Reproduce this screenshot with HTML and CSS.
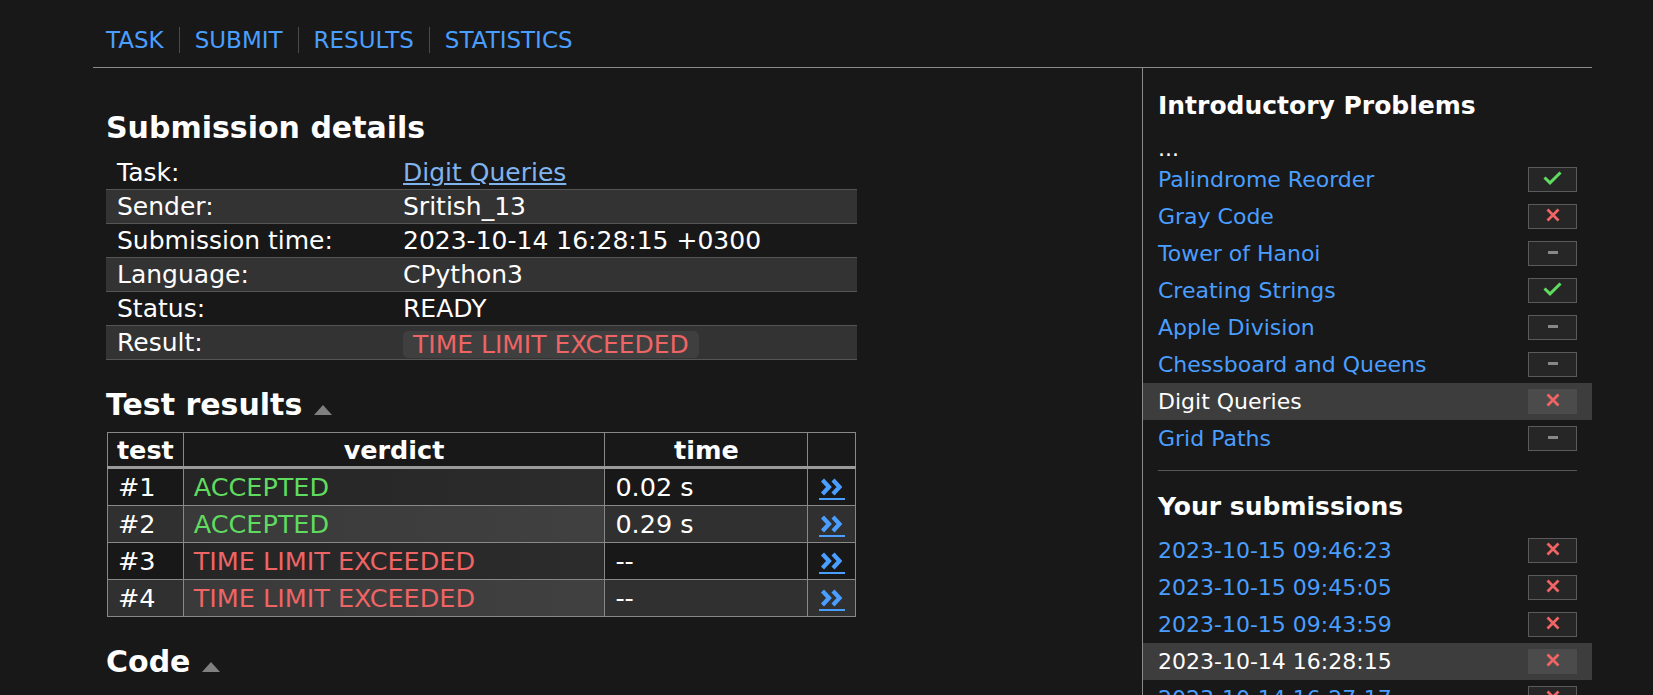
FILE: index.html
```html
<!DOCTYPE html>
<html>
<head>
<meta charset="utf-8">
<title>CSES - Submission</title>
<link rel="stylesheet" href="styles.css">
</head>
<body>
<div class="page">
  <nav class="nav">
    <a href="#">TASK</a>
    <a href="#">SUBMIT</a>
    <a href="#">RESULTS</a>
    <a href="#">STATISTICS</a>
  </nav>
  <div class="content">
    <main class="main">
      <h2 class="h-first">Submission details</h2>
      <table class="details">
        <tr><td class="lbl">Task:</td><td><a class="task-link" href="#">Digit Queries</a></td></tr>
        <tr><td class="lbl">Sender:</td><td>Sritish_13</td></tr>
        <tr><td class="lbl">Submission time:</td><td>2023-10-14 16:28:15 +0300</td></tr>
        <tr><td class="lbl">Language:</td><td>CPython3</td></tr>
        <tr><td class="lbl">Status:</td><td>READY</td></tr>
        <tr><td class="lbl">Result:</td><td><span class="badge red">TIME LIMIT EXCEEDED</span></td></tr>
      </table>

      <h2 class="h-next">Test results <span class="tri"></span></h2>
      <table class="tests">
        <tr><th class="c-test">test</th><th class="c-verdict">verdict</th><th class="c-time">time</th><th class="c-link"></th></tr>
        <tr><td>#1</td><td class="v green">ACCEPTED</td><td>0.02 s</td><td class="lnk"><a href="#"><svg width="24" height="18" viewBox="0 0 24 18"><path d="M2.5 2 L9 9 L2.5 16 M13 2 L19.5 9 L13 16" fill="none" stroke="#4a9eff" stroke-width="4.2"/></svg></a></td></tr>
        <tr><td>#2</td><td class="v green">ACCEPTED</td><td>0.29 s</td><td class="lnk"><a href="#"><svg width="24" height="18" viewBox="0 0 24 18"><path d="M2.5 2 L9 9 L2.5 16 M13 2 L19.5 9 L13 16" fill="none" stroke="#4a9eff" stroke-width="4.2"/></svg></a></td></tr>
        <tr><td>#3</td><td class="v red">TIME LIMIT EXCEEDED</td><td>--</td><td class="lnk"><a href="#"><svg width="24" height="18" viewBox="0 0 24 18"><path d="M2.5 2 L9 9 L2.5 16 M13 2 L19.5 9 L13 16" fill="none" stroke="#4a9eff" stroke-width="4.2"/></svg></a></td></tr>
        <tr><td>#4</td><td class="v red">TIME LIMIT EXCEEDED</td><td>--</td><td class="lnk"><a href="#"><svg width="24" height="18" viewBox="0 0 24 18"><path d="M2.5 2 L9 9 L2.5 16 M13 2 L19.5 9 L13 16" fill="none" stroke="#4a9eff" stroke-width="4.2"/></svg></a></td></tr>
      </table>

      <h2 class="h-code">Code <span class="tri"></span></h2>
    </main>

    <aside class="side">
      <h3 class="s-head">Introductory Problems</h3>
      <div class="dots">...</div>
      <ul class="list">
        <li class="row"><a href="#">Palindrome Reorder</a><span class="box"><svg width="19" height="14" viewBox="0 0 19 14"><path d="M1.5 6.5 L7 11.8 L17.5 1.5" fill="none" stroke="#5fdc5f" stroke-width="3"/></svg></span></li>
        <li class="row"><a href="#">Gray Code</a><span class="box"><svg width="14" height="14" viewBox="0 0 14 14"><path d="M1.5 1.5 L12.5 12.5 M12.5 1.5 L1.5 12.5" fill="none" stroke="#ef6464" stroke-width="2.8"/></svg></span></li>
        <li class="row"><a href="#">Tower of Hanoi</a><span class="box"><span class="dash"></span></span></li>
        <li class="row"><a href="#">Creating Strings</a><span class="box"><svg width="19" height="14" viewBox="0 0 19 14"><path d="M1.5 6.5 L7 11.8 L17.5 1.5" fill="none" stroke="#5fdc5f" stroke-width="3"/></svg></span></li>
        <li class="row"><a href="#">Apple Division</a><span class="box"><span class="dash"></span></span></li>
        <li class="row"><a href="#">Chessboard and Queens</a><span class="box"><span class="dash"></span></span></li>
        <li class="row current"><a href="#">Digit Queries</a><span class="box"><svg width="14" height="14" viewBox="0 0 14 14"><path d="M1.5 1.5 L12.5 12.5 M12.5 1.5 L1.5 12.5" fill="none" stroke="#ef6464" stroke-width="2.8"/></svg></span></li>
        <li class="row"><a href="#">Grid Paths</a><span class="box"><span class="dash"></span></span></li>
      </ul>
      <hr class="s-sep">
      <h3 class="s-head2">Your submissions</h3>
      <ul class="list">
        <li class="row"><a href="#">2023-10-15 09:46:23</a><span class="box"><svg width="14" height="14" viewBox="0 0 14 14"><path d="M1.5 1.5 L12.5 12.5 M12.5 1.5 L1.5 12.5" fill="none" stroke="#ef6464" stroke-width="2.8"/></svg></span></li>
        <li class="row"><a href="#">2023-10-15 09:45:05</a><span class="box"><svg width="14" height="14" viewBox="0 0 14 14"><path d="M1.5 1.5 L12.5 12.5 M12.5 1.5 L1.5 12.5" fill="none" stroke="#ef6464" stroke-width="2.8"/></svg></span></li>
        <li class="row"><a href="#">2023-10-15 09:43:59</a><span class="box"><svg width="14" height="14" viewBox="0 0 14 14"><path d="M1.5 1.5 L12.5 12.5 M12.5 1.5 L1.5 12.5" fill="none" stroke="#ef6464" stroke-width="2.8"/></svg></span></li>
        <li class="row current"><a href="#">2023-10-14 16:28:15</a><span class="box"><svg width="14" height="14" viewBox="0 0 14 14"><path d="M1.5 1.5 L12.5 12.5 M12.5 1.5 L1.5 12.5" fill="none" stroke="#ef6464" stroke-width="2.8"/></svg></span></li>
        <li class="row"><a href="#">2023-10-14 16:27:17</a><span class="box"><svg width="14" height="14" viewBox="0 0 14 14"><path d="M1.5 1.5 L12.5 12.5 M12.5 1.5 L1.5 12.5" fill="none" stroke="#ef6464" stroke-width="2.8"/></svg></span></li>
      </ul>
    </aside>
  </div>
</div>
</body>
</html>
```

FILE: styles.css
```css
html, body {
  margin: 0;
  padding: 0;
  background: #181818;
  color: #ffffff;
  font-family: "DejaVu Sans", Verdana, sans-serif;
}

a {
  color: #4a9eff;
  text-decoration: none;
}

.page {
  margin-left: 93px;
  width: 1499px;
}

/* top navigation */
.nav {
  display: flex;
  align-items: flex-start;
  height: 68px;
  box-sizing: border-box;
  padding: 27px 0 0 13px;
  border-bottom: 1px solid #8a8a8a;
}

.nav a {
  font-size: 23px;
  line-height: 26px;
  padding: 0 15px;
  color: #4a9eff;
}

.nav a:first-child {
  padding-left: 0;
}

.nav a + a {
  border-left: 1px solid #4a4a4a;
}

.content {
  display: flex;
  min-height: 626px;
}

/* main column */
.main {
  width: 1049px;
  box-sizing: border-box;
  padding-left: 13px;
}

h2 {
  margin: 0;
  font-size: 30px;
  line-height: 34px;
  font-weight: bold;
  display: flex;
  align-items: flex-end;
}

.h-first {
  margin-top: 43px;
  margin-bottom: 11px;
}

.h-next {
  margin-top: 28px;
  margin-bottom: 10px;
}

.h-code {
  margin-top: 28px;
}

.tri {
  width: 0;
  height: 0;
  margin-left: 12px;
  margin-bottom: 7px;
  border-left: 9px solid transparent;
  border-right: 9px solid transparent;
  border-bottom: 10px solid #808080;
}

.details {
  width: 751px;
  border-collapse: collapse;
  font-size: 25px;
}

.details td {
  height: 33px;
  line-height: 33px;
  padding: 0 11px;
  border-bottom: 1px solid #555555;
  white-space: nowrap;
}

.details tr:nth-child(even) {
  background: #333333;
}

.details td.lbl {
  width: 264px;
}

.task-link {
  color: #80b4ee;
  text-decoration: underline;
}

.badge {
  display: inline-block;
  line-height: 27px;
  padding: 0 10px;
  background: #3f3f3f;
  border-radius: 5px;
  vertical-align: middle;
}

.red { color: #ef6464; }
.green { color: #5fdc5f; }

.tests {
  width: 749px;
  margin-left: 1px;
  border-collapse: collapse;
  border: 1px solid #888888;
  font-size: 25.5px;
}

.tests th {
  height: 33px;
  padding: 0;
  font-weight: bold;
  border: 1px solid #888888;
  border-bottom: 3px solid #9a9a9a;
  background: #181818;
}

.c-test { width: 75px; }
.c-verdict { width: 423px; }
.c-time { width: 204px; }
.c-link { width: 47px; }

.tests td {
  height: 36px;
  padding: 0 10px;
  border: 1px solid #888888;
  white-space: nowrap;
}

.tests tr:nth-child(even) td {
  background: #181818;
}

.tests tr:nth-child(even) td.v {
  background: linear-gradient(90deg, #252525, #2c2c2c);
}

.tests tr:nth-child(odd) td {
  background: #303030;
}

.tests tr:nth-child(odd) td.v {
  background: linear-gradient(90deg, #3a3a3a, #404040);
}

.tests td.lnk {
  padding: 0;
  text-align: center;
}

.lnk a {
  display: inline-block;
  padding: 0 1px 2px;
  border-bottom: 2px solid #4a9eff;
  line-height: 0;
  vertical-align: middle;
}

/* sidebar */
.side {
  width: 450px;
  box-sizing: border-box;
  border-left: 1px solid #8a8a8a;
}

.s-head, .s-head2 {
  margin: 0;
  padding: 0 15px;
  font-size: 25px;
  line-height: 30px;
  font-weight: bold;
}

.s-head {
  margin-top: 23px;
}

.s-head2 {
  margin-top: 21px;
  margin-bottom: 10px;
}

.dots {
  height: 30px;
  box-sizing: border-box;
  padding: 6px 15px 0;
  margin-top: 10px;
  font-size: 22px;
  line-height: 24px;
}

.list {
  list-style: none;
  margin: 0;
  padding: 0;
}

.row {
  display: flex;
  align-items: center;
  justify-content: space-between;
  height: 37px;
  padding: 0 15px;
  font-size: 22px;
}

.row.current {
  background: #3d3d3d;
}

.row.current a {
  color: #ffffff;
}

.box {
  width: 49px;
  height: 25px;
  box-sizing: border-box;
  padding-bottom: 3px;
  border: 1px solid #5a5a5a;
  background: #262626;
  display: flex;
  align-items: center;
  justify-content: center;
}

.row.current .box {
  background: #4b4b4b;
  border-color: #4b4b4b;
}

.dash {
  width: 10px;
  height: 3px;
  background: #888888;
}

.s-sep {
  margin: 13px 15px 0;
  border: 0;
  border-top: 1px solid #555555;
  height: 0;
}
```
